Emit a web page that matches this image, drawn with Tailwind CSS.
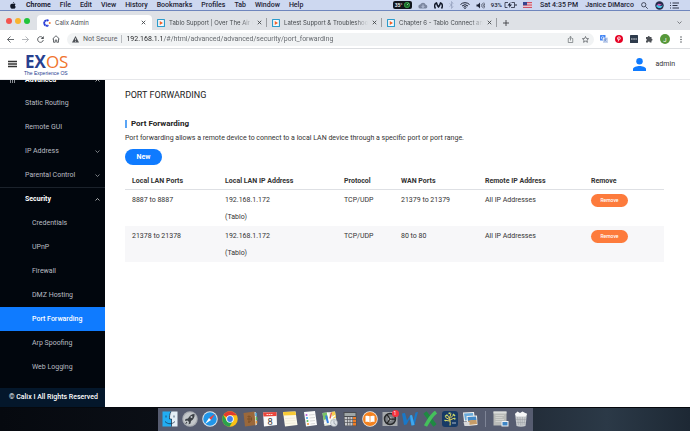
<!DOCTYPE html>
<html lang="en">
<head>
  <meta charset="utf-8">
  <meta name="viewport" content="width=device-width, initial-scale=1">
  <title>Calix Admin</title>
  <script src="https://cdn.jsdelivr.net/npm/@tailwindcss/browser@4"></script>
</head>
<body class="flex h-screen flex-col overflow-hidden bg-[#05080d] font-[Roboto,sans-serif] text-[7px] text-[#333]">

  <!-- shared icons -->
  <svg class="hidden">
    <symbol id="play" viewBox="0 0 16 16"><rect x="1" y="1" width="14" height="14" rx="1.5" fill="#f4fafd" stroke="#2c9bcb" stroke-width="2.4"/><path d="M5.5 4v8l6.5-4z" fill="#f2622b"/></symbol>
    <symbol id="close" viewBox="0 0 10 10"><path d="M1.5 1.5l7 7M8.5 1.5l-7 7" stroke="#3c4043" stroke-width="1.7" fill="none"/></symbol>
    <symbol id="down" viewBox="0 0 10 6"><path d="M1 1l4 4 4-4" stroke="currentColor" stroke-width="1.3" fill="none"/></symbol>
    <symbol id="up" viewBox="0 0 10 6"><path d="M1 5l4-4 4 4" stroke="currentColor" stroke-width="1.3" fill="none"/></symbol>
  </svg>

  <!-- mac menu bar -->
  <div class="flex h-[11px] shrink-0 items-center justify-between border-b border-[#6f86bd] bg-[#cdd8f0] pr-[11px] pl-[10px] text-[7px] leading-[10px] font-medium whitespace-nowrap text-[#1c2233]">
    <div class="flex items-center gap-[9px]">
      <svg class="mr-px h-[7px] w-[6px]" viewBox="0 0 14 17" fill="#111827"><path d="M9.6 0c.1 1.9-1.300 3.600-3 3.600C6.400 1.900 7.900.2 9.600 0zM7.200 4.700c.8 0 1.700-.9 3.200-.8 1.100 0 2.200.6 2.900 1.600-2.600 1.600-2.200 5 .5 6.100-.6 1.800-2.200 4.800-3.800 4.800-1.100 0-1.500-.7-2.800-.7s-1.700.7-2.800.7C2.400 16.400.2 12.700.2 9.500c0-3.400 2.100-5.300 4.100-5.300 1.300 0 2.200.5 2.900.5z"/></svg>
      <span class="font-bold">Chrome</span><span>File</span><span>Edit</span><span>View</span><span>History</span><span>Bookmarks</span><span>Profiles</span><span>Tab</span><span>Window</span><span>Help</span>
    </div>
    <div class="flex items-center gap-[6px]">
      <span class="flex h-2 w-[19px] items-center justify-between rounded-xs bg-[#10151c] px-0.5 text-[5px] text-white">35°<svg class="size-[6px]" viewBox="0 0 10 10"><circle cx="5" cy="5" r="4.500" fill="#1b6b2c" stroke="#3fbf55"/><path d="M5 5l2.500-2.500" stroke="#fff"/></svg></span>
      <svg class="h-[7px] w-[10px]" viewBox="0 0 20 14"><path d="M5 13a4 4 0 0 1-.5-8A6 6 0 0 1 15.500 5.500 3.800 3.800 0 0 1 15.500 13z" fill="#7c879f"/><path d="M10 5v6M7.500 8.500L10 11l2.500-2.500" stroke="#cdd8f0" stroke-width="1.500" fill="none"/></svg>
      <svg class="h-[7px] w-[9px]" viewBox="0 0 18 14"><path d="M3 13C0 9 1 3 5 2c1 3 2 6 4 8 2-2 3-5 4-8 4 1 5 7 2 11" fill="none" stroke="#111827" stroke-width="3"/></svg>
      <svg class="h-2 w-[5px]" viewBox="0 0 10 16"><path d="M1 4.500l7 7L5 15V1l3 3.500-7 7" fill="none" stroke="#8e9bb8" stroke-width="1.300"/></svg>
      <svg class="h-[7px] w-[10px]" viewBox="0 0 20 14" fill="none" stroke="#1c2233" stroke-width="2"><path d="M1 5a13 13 0 0 1 18 0M4 8a9 9 0 0 1 12 0M7 10.500a4.500 4.500 0 0 1 6 0"/><circle cx="10" cy="12.500" r=".6"/></svg>
      <svg class="h-[7px] w-[9px]" viewBox="0 0 18 14"><path d="M1 5h3l4-4v12L4 9H1z" fill="#1c2233"/><path d="M10.500 4.500a4 4 0 0 1 0 5M13 2.500a7 7 0 0 1 0 9M15.500 1a10 10 0 0 1 0 12" fill="none" stroke="#1c2233" stroke-width="1.200"/></svg>
      <span class="flex items-center gap-0.5 text-[6px]">93%
        <svg class="h-[6px] w-[13px]" viewBox="0 0 26 12"><path d="M8 1H2v10h5M15 1h6v10h-7" fill="none" stroke="#1c2233" stroke-width="1.500"/><path d="M13 0L7 7h4l-1 5 6-7h-4z" fill="#1c2233"/><path d="M23 4v4h2V4z" fill="#1c2233"/></svg></span>
      <svg class="h-[6px] w-[9px]" viewBox="0 0 18 12"><path fill="#f4f4f8" d="M0 0h18v12H0z"/><path d="M0 1h18M0 4.300h18M0 7.600h18M0 11h18" stroke="#c6354b" stroke-width="1.700"/><path fill="#34458f" d="M0 0h8v6.500H0z"/></svg>
      <span class="ml-0.5">Sat 4:35 PM</span>
      <span class="ml-px">Janice DiMarco</span>
      <svg class="ml-px size-[7px]" viewBox="0 0 14 14" fill="none" stroke="#1c2233" stroke-width="1.500"><circle cx="5.500" cy="5.500" r="4.300"/><path d="M9 9l4.500 4.500"/></svg>
      <svg class="ml-px size-[9px]" viewBox="0 0 16 16"><circle cx="8" cy="8" r="7.500" fill="#262a4a"/><path d="M2 9c3-5 8 3 12-2-1 6-8 8-12 2z" fill="#46c7e8"/><path d="M4 6c3-3 6 1 8-1-2 5-6 4-8 1z" fill="#d458b8"/></svg>
      <svg class="h-[7px] w-[9px]" viewBox="0 0 18 14" stroke="#1c2233" stroke-width="1.800"><path d="M0 2h2M5 2h13M0 7h2M5 7h10M0 12h2M5 12h13"/></svg>
    </div>
  </div>

  <!-- tab strip -->
  <div class="flex h-[19px] shrink-0 items-end bg-[#dee1e6] font-[Inter,sans-serif] text-[6px] text-[#45494d]">
    <div class="flex h-[15px] w-[37px] shrink-0 items-center gap-[3px] pb-[3px] pl-[6px]">
      <span class="size-[6px] rounded-full bg-[#f4544d]"></span><span class="size-[6px] rounded-full bg-[#f8b42e]"></span><span class="size-[6px] rounded-full bg-[#1fc43a]"></span>
    </div>
    <div class="flex h-[15px] w-[115px] items-center gap-1 rounded-t-[4px] bg-white px-[6px]">
      <svg class="size-2 shrink-0" viewBox="0 0 16 16"><path d="M11 3.500A5.500 5.500 0 1 0 11 12.500" fill="none" stroke="#2337d6" stroke-width="3.600" stroke-dasharray="4 .5"/><circle cx="13.500" cy="8" r="2" fill="#f47a35"/></svg>
      <span class="flex-1">Calix Admin</span>
      <button aria-label="Close tab"><svg class="size-[5px]"><use href="#close"/></svg></button>
    </div>
    <div class="flex h-[15px] w-[115px] items-center gap-1 px-[5px]">
      <svg class="size-2 shrink-0"><use href="#play"/></svg>
      <span class="flex-1 overflow-hidden whitespace-nowrap [mask-image:linear-gradient(90deg,#000_85%,transparent)]">Tablo Support | Over The Air (OTA)</span>
      <button aria-label="Close tab"><svg class="size-[5px]"><use href="#close"/></svg></button>
      <span class="-mr-[5px] h-[9px] w-px bg-[#9a9da2]"></span>
    </div>
    <div class="flex h-[15px] w-[115px] items-center gap-1 px-[5px]">
      <svg class="size-2 shrink-0"><use href="#play"/></svg>
      <span class="flex-1 overflow-hidden whitespace-nowrap [mask-image:linear-gradient(90deg,#000_85%,transparent)]">Latest Support &amp; Troubleshooting</span>
      <button aria-label="Close tab"><svg class="size-[5px]"><use href="#close"/></svg></button>
      <span class="-mr-[5px] h-[9px] w-px bg-[#9a9da2]"></span>
    </div>
    <div class="flex h-[15px] w-[115px] items-center gap-1 px-[5px]">
      <svg class="size-2 shrink-0"><use href="#play"/></svg>
      <span class="flex-1 overflow-hidden whitespace-nowrap [mask-image:linear-gradient(90deg,#000_85%,transparent)]">Chapter 6 - Tablo Connect and Remote</span>
      <button aria-label="Close tab"><svg class="size-[5px]"><use href="#close"/></svg></button>
      <span class="-mr-[5px] h-[9px] w-px bg-[#9a9da2]"></span>
    </div>
    <div class="flex h-[15px] flex-1 items-center justify-between pr-2 pl-[6px]">
      <button aria-label="New tab"><svg class="size-[6px]" viewBox="0 0 12 12"><path d="M6 0v12M0 6h12" stroke="#3c4043" stroke-width="1.800"/></svg></button>
      <button aria-label="Search tabs"><svg class="h-[3px] w-[5px]"><use href="#down"/></svg></button>
    </div>
  </div>

  <!-- toolbar -->
  <div class="flex h-[19px] shrink-0 items-center border-b border-[#dcdee1] bg-white pr-2 pl-[7px] text-[#5f6368]">
    <div class="flex w-[60px] shrink-0 items-center gap-2">
      <button aria-label="Back"><svg class="size-[7px]" viewBox="0 0 14 14" fill="none" stroke="#4d5156" stroke-width="1.700"><path d="M14 7H1M7 1L1 7l6 6"/></svg></button>
      <button aria-label="Forward"><svg class="size-[7px]" viewBox="0 0 14 14" fill="none" stroke="#a8abb0" stroke-width="1.700"><path d="M0 7h13M7 1l6 6-6 6"/></svg></button>
      <button aria-label="Reload"><svg class="size-[7px]" viewBox="0 0 14 14"><path d="M11.500 3.500A5.700 5.700 0 1 0 12.600 8" fill="none" stroke="#4d5156" stroke-width="1.800"/><path d="M13.500 0v6h-6z" fill="#4d5156"/></svg></button>
      <button aria-label="Home"><svg class="size-2" viewBox="0 0 16 16" fill="none" stroke="#4d5156" stroke-width="1.700"><path d="M1 8l7-6.500L15 8M3 7v7.500h3.500V10h3v4.500H13V7"/></svg></button>
    </div>
    <div class="flex h-[13px] flex-1 items-center rounded-full bg-[#f1f3f4] pr-[5px] pl-[5px]">
      <svg class="size-[7px]" viewBox="0 0 14 14"><path d="M7 0l7 13H0z" fill="#4d5156"/><path d="M7 4.500v4M7 10v1.600" stroke="#fff" stroke-width="1.400"/></svg>
      <label for="url" class="ml-1 whitespace-nowrap">Not Secure</label>
      <span class="mx-1 h-2 w-px bg-[#b8bbbf]"></span>
      <input id="url" type="text" value="192.168.1.1/#/html/advanced/advanced/security/port_forwarding" class="min-w-0 flex-1 bg-[linear-gradient(90deg,#202124_37px,#5f6368_37px)] bg-clip-text text-transparent outline-none">
      <button aria-label="Share" class="mr-2"><svg class="size-[7px]" viewBox="0 0 14 14" fill="none" stroke="#5f6368" stroke-width="1.300"><path d="M5 5H2.500v8h9V5H9M7 9V1M4.500 3L7 .7 9.500 3"/></svg></button>
      <button aria-label="Bookmark"><svg class="size-[7px]" viewBox="0 0 14 14" fill="none" stroke="#4d5156" stroke-width="1.400"><path d="M7 1l1.800 4 4.400.4-3.300 2.900 1 4.300L7 10.300l-3.900 2.300 1-4.300L.8 5.400 5.200 5z"/></svg></button>
    </div>
    <div class="ml-[6px] flex shrink-0 items-center gap-[7px]">
      <svg class="size-2" viewBox="0 0 16 16"><rect width="11" height="11" rx="1" fill="#4285f4"/><rect x="6" y="5" width="10" height="11" rx="1" fill="#c9d6ee"/><path d="M8 8h6M11 7v1c0 2-1 4-3 5M9 9c1 2 2 3 4 4" stroke="#4773c4" fill="none"/><path d="M7.500 4A2.700 2.700 0 1 0 8 6H5.500" stroke="#fff" stroke-width="1.200" fill="none"/></svg>
      <svg class="size-2" viewBox="0 0 16 16"><circle cx="8" cy="8" r="8" fill="#e60023"/><path d="M8 5.500L6.500 13M5.200 9C3.200 4 8 2.800 9.800 4.300c2.200 2.200.3 6.300-2.600 5" fill="none" stroke="#fff" stroke-width="1.600"/></svg>
      <svg class="size-2" viewBox="0 0 16 16"><rect width="16" height="16" rx="1" fill="#2e3b4c"/><path d="M2 8h12" stroke="#d5dae0" stroke-width="2" stroke-dasharray="2.500 .6"/></svg>
      <svg class="size-2" viewBox="0 0 16 16"><path d="M2 4h3.500a2 2 0 1 1 4 0H13v3.500a2 2 0 1 1 0 4V15H9.500a1.800 1.800 0 0 0-3.600 0H2v-3.500a1.800 1.800 0 0 0 0-3.600z" fill="#4d5156"/></svg>
      <span class="flex size-[10px] items-center justify-center rounded-full bg-[#57983a] text-[6px] text-white">J</span>
      <button aria-label="Menu"><svg class="ml-[3px] h-[7px] w-0.5" viewBox="0 0 4 14" fill="#4d5156"><circle cx="2" cy="2" r="1.500"/><circle cx="2" cy="7" r="1.500"/><circle cx="2" cy="12" r="1.500"/></svg></button>
    </div>
  </div>

  <!-- router header -->
  <header class="flex h-[31px] shrink-0 items-center justify-between border-b border-[#e6e7ea] bg-white pr-[15px] pl-2">
    <div class="flex items-center gap-2">
      <button aria-label="Toggle menu"><svg class="h-2 w-[9px]" viewBox="0 0 18 16" stroke="#333" stroke-width="2.600"><path d="M0 3h18M0 8h18M0 13h18"/></svg></button>
      <div>
        <div class="font-['Open_Sans',sans-serif] text-[17px] leading-[17px] text-[#f0732c]"><b class="text-[#27408f]">EX</b>OS</div>
        <div class="-ml-px font-['Liberation_Sans',sans-serif] text-[5px] leading-[6px] text-[#27408f]">The Experience OS</div>
      </div>
    </div>
    <div class="flex items-center gap-[10px]">
      <svg class="h-[13px] w-[13px]" viewBox="0 0 26 26" fill="#0f7bff"><circle cx="13" cy="6.500" r="6.500"/><path d="M0 26v-4c0-4 8-6 13-6s13 2 13 6v4z"/></svg>
      <span>admin</span>
    </div>
  </header>

  <div class="flex min-h-0 flex-1">
    <nav class="flex w-[105px] shrink-0 flex-col bg-[#01060d] text-[#b9bdc3]">
      <ul class="-mt-[13px] min-h-0 flex-1 [clip-path:inset(13px_0_0)]">
        <li class="flex h-6 items-center pt-0.5 pr-[5px] pl-[10px] font-bold text-white"><svg class="mr-[10px] size-[5px]" viewBox="0 0 10 10" stroke="#b9bdc3" stroke-width="1.500"><path d="M1 0v10M5 0v10M9 0v10"/></svg><a href="#" class="flex-1">Advanced</a><svg class="h-[3px] w-[5px]"><use href="#up"/></svg></li>
        <li class="flex h-6 items-center pl-[25px]"><a href="#">Static Routing</a></li>
        <li class="flex h-6 items-center pl-[25px]"><a href="#">Remote GUI</a></li>
        <li class="flex h-6 items-center pr-[5px] pl-[25px]"><a href="#" class="flex-1">IP Address</a><svg class="h-[3px] w-[5px]"><use href="#down"/></svg></li>
        <li class="flex h-6 items-center pr-[5px] pl-[25px]"><a href="#" class="flex-1">Parental Control</a><svg class="h-[3px] w-[5px]"><use href="#down"/></svg></li>
        <li class="flex h-6 items-center border-t border-[#1b222b] pr-[5px] pl-[25px] font-bold text-white"><a href="#" class="flex-1">Security</a><svg class="h-[3px] w-[5px]"><use href="#up"/></svg></li>
        <li class="flex h-6 items-center pl-8"><a href="#">Credentials</a></li>
        <li class="flex h-6 items-center pl-8"><a href="#">UPnP</a></li>
        <li class="flex h-6 items-center pl-8"><a href="#">Firewall</a></li>
        <li class="flex h-6 items-center pl-8"><a href="#">DMZ Hosting</a></li>
        <li class="flex h-6 items-center bg-[#0f7bff] pl-8 font-medium text-white"><a href="#">Port Forwarding</a></li>
        <li class="flex h-6 items-center pl-8"><a href="#">Arp Spoofing</a></li>
        <li class="flex h-6 items-center pl-8"><a href="#">Web Logging</a></li>
      </ul>
      <div class="flex h-[19px] items-center bg-[#04172b] pl-[9px] font-medium text-white">© Calix I All Rights Reserved</div>
    </nav>

    <main class="min-w-0 flex-1 bg-white pt-2 pr-[26px] pl-5">
      <h1 class="text-[9px] leading-[14px] text-[#222]">PORT FORWARDING</h1>
      <h2 class="mt-4 flex items-center gap-1 text-[8px] leading-[12px] font-bold text-[#222]"><span class="h-2 w-0.5 bg-[#5aa5f5]"></span>Port Forwarding</h2>
      <p class="mt-0.5 leading-[12px]">Port forwarding allows a remote device to connect to a local LAN device through a specific port or port range.</p>
      <button class="mt-[5px] block h-4 w-[37px] rounded-full bg-[#0f7bff] font-bold text-white">New</button>

      <table class="mt-2 w-full table-fixed text-left">
        <thead>
          <tr class="h-4 border-b border-[#dee0e4]">
            <th class="w-[93px] pl-[7px]">Local LAN Ports</th>
            <th class="w-[119px] pl-[7px]">Local LAN IP Address</th>
            <th class="w-[57px] pl-[7px]">Protocol</th>
            <th class="w-[84px] pl-[7px]">WAN Ports</th>
            <th class="w-[106px] pl-[7px]">Remote IP Address</th>
            <th class="pl-[7px]">Remove</th>
          </tr>
        </thead>
        <tbody class="align-top leading-[17px]">
          <tr>
            <td class="pt-0.5 pl-[7px]">8887 to 8887</td>
            <td class="pt-0.5 pl-[7px]">192.168.1.172<br>(Tablo)</td>
            <td class="pt-0.5 pl-[7px]">TCP/UDP</td>
            <td class="pt-0.5 pl-[7px]">21379 to 21379</td>
            <td class="pt-0.5 pl-[7px]">All IP Addresses</td>
            <td class="pt-1 pl-[7px]"><button class="block h-[13px] w-[37px] rounded-full bg-[#fd7b3c] text-[5px] leading-[13px] font-medium text-white">Remove</button></td>
          </tr>
          <tr class="bg-[#f7f7f9]">
            <td class="pt-0.5 pl-[7px]">21378 to 21378</td>
            <td class="pt-0.5 pl-[7px]">192.168.1.172<br>(Tablo)</td>
            <td class="pt-0.5 pl-[7px]">TCP/UDP</td>
            <td class="pt-0.5 pl-[7px]">80 to 80</td>
            <td class="pt-0.5 pl-[7px]">All IP Addresses</td>
            <td class="pt-1 pl-[7px]"><button class="block h-[13px] w-[37px] rounded-full bg-[#fd7b3c] text-[5px] leading-[13px] font-medium text-white">Remove</button></td>
          </tr>
        </tbody>
      </table>
    </main>
  </div>

  <!-- desktop and dock -->
  <div class="flex h-6 shrink-0 justify-center border-t border-[#05080d] bg-[linear-gradient(90deg,#06090f_0%,#0b0f16_24%,#222c38_76%,#2b3947_88%,#1d2834_100%)]">
    <div class="flex items-start bg-[#565c70] px-0.5 pt-[3px]">
      <svg class="mx-0.5 size-4" viewBox="0 0 32 32"><path d="M1 1h17c-3 6-3 10-3 15h4v15H1z" fill="#22aef3"/><path d="M18 1h13v30H19V16h-4c0-5 0-9 3-15z" fill="#e4eef6"/><path d="M8 9v4M24 9v4M6 21c6 6 14 6 20 0M18 1c-3 6-3 10-3 15h4v15" fill="none" stroke="#16324d" stroke-width="1.500"/></svg>
      <svg class="mx-0.5 size-4" viewBox="0 0 32 32"><circle cx="16" cy="16" r="15.500" fill="#a9adb2"/><circle cx="16" cy="16" r="13" fill="#c3c7ca"/><path d="M25 6c-6 0-10 4-13 9l-5 1-1 4 5-1 3 3-1 5 4-2 1-5c5-3 8-8 7-14zM9 21l-3 5 5-2z" fill="#3b4046"/><circle cx="19" cy="12" r="2" fill="#c3c7ca"/></svg>
      <svg class="mx-0.5 size-4" viewBox="0 0 32 32"><circle cx="16" cy="16" r="15.500" fill="#dfe5ea"/><circle cx="16" cy="16" r="13.500" fill="#2196e8"/><path d="M26 6L18 18l-4-4z" fill="#f0443c"/><path d="M6 26l8-12 4 4z" fill="#fff"/></svg>
      <svg class="mx-0.5 size-4" viewBox="0 0 32 32"><circle cx="16" cy="16" r="15.500" fill="#fbc116"/><path d="M16 16L2.600 8.200A15.500 15.500 0 0 1 29.400 8.500H16z" fill="#e33b2e"/><path d="M2.600 8.200A15.500 15.500 0 0 0 15 31.500l7-12-6-3.500-6.500 3.500z" fill="#2ba24c"/><circle cx="16" cy="16" r="7.500" fill="#fff"/><circle cx="16" cy="16" r="5.800" fill="#3f80ee"/></svg>
      <svg class="mx-0.5 size-4" viewBox="0 0 32 32"><path d="M3 4l22-3 3 27-22 3z" fill="#9a683b"/><path d="M25 2l3 1 2 24-3 2z" fill="#e9e3d2"/><path d="M28 4v6" stroke="#4aa8dd" stroke-width="3"/><path d="M29 12v6" stroke="#5dbb58" stroke-width="3"/><path d="M29 20v5" stroke="#f09c38" stroke-width="3"/><path d="M11 11c4-2 8 0 8 5s-3 6-7 6M14 10v14M10 16h9" stroke="#7c5029" stroke-width="2" fill="none"/></svg>
      <svg class="mx-0.5 size-4" viewBox="0 0 32 32"><path d="M2 3l27-1 1 26-26 3z" fill="#fafafa"/><path d="M2 3l27-1v8L3 11z" fill="#e9453c"/><path d="M9 7h13" stroke="#fff" stroke-width="1.600" stroke-dasharray="3 1"/><text x="11" y="27" font-size="17" font-family="Inter" fill="#333">8</text></svg>
      <svg class="mx-0.5 size-4" viewBox="0 0 32 32"><path d="M2 2l25-1 4 27-25 3z" fill="#fbf8ea"/><path d="M2 2l25-1 1 7L3 9z" fill="#f8cb35"/><path d="M6 15l20-1M7 20l20-1M7 25l20-1" stroke="#e2ddc8"/></svg>
      <svg class="mx-0.5 size-4" viewBox="0 0 32 32"><path d="M4 2l22-2 4 28-22 3z" fill="#fafafa"/><circle cx="9" cy="8" r="2" fill="#b258d8"/><circle cx="10" cy="14" r="2" fill="#3c9ff0"/><circle cx="11" cy="20" r="2" fill="#54c455"/><circle cx="12" cy="26" r="2" fill="#f29a37"/><path d="M14 8l11-1M15 14l11-1M16 20l10-1M17 26l9-1" stroke="#ccc" stroke-width="1.500"/></svg>
      <svg class="mx-0.5 size-4" viewBox="0 0 32 32"><path d="M1 4l25-3 4 25-25 4z" fill="#e8ecdf"/><path d="M1 4l9-1 3 12-10 3z" fill="#79c267"/><path d="M19 2l7-1 2 12-6 2z" fill="#f6ce4c"/><path d="M4 25l22-16M11 3l6 25" stroke="#fff" stroke-width="3"/><path d="M8 9l4 15" stroke="#347fe0" stroke-width="4"/><path d="M19 3l-3 12" stroke="#e25b4d" stroke-width="2.500"/><circle cx="24" cy="24" r="7" fill="#dfe3e8" stroke="#9098a3"/><path d="M24 19v6l4 2" stroke="#66707c" fill="none"/></svg>
      <svg class="mx-0.5 size-4" viewBox="0 0 32 32"><path d="M3 2h26v28H5z" fill="#4a4c51"/><path d="M5 4h22v6H5z" fill="#9fa6a7"/><path d="M5 12h16v17H6z" fill="#c8c9cb"/><path d="M22 12h6v17h-6z" fill="#ef7d27"/><path d="M5 17h23M5 23h23M11 12v17M16 12v17" stroke="#4a4c51" stroke-width="1.300"/></svg>
      <svg class="mx-0.5 size-4" viewBox="0 0 32 32"><circle cx="16" cy="16" r="15.500" fill="#f3eee7"/><circle cx="16" cy="16" r="14" fill="#f48220"/><path d="M16 11c-3-2-6-2-9-1v12c3-1 6-1 9 1 3-2 6-2 9-1V10c-3-1-6-1-9 1z" fill="#fff"/><path d="M16 11v12" stroke="#f48220" stroke-width="1.500"/></svg>
      <div class="relative mx-0.5">
        <svg class="size-4" viewBox="0 0 32 32"><path d="M1 2h30v28H1z" fill="#a6a9ad"/><circle cx="16" cy="16" r="11" fill="#7b7e83" stroke="#292b2e" stroke-width="3"/><circle cx="16" cy="16" r="4" fill="#b4b7ba"/><path d="M16 16h10M16 16l-6-9M16 16l-6 9" stroke="#222" stroke-width="2.500"/></svg>
        <span class="absolute -top-px -right-px flex size-[7px] items-center justify-center rounded-full bg-[#f5333f] text-[5px] leading-none text-white">1</span>
      </div>
      <svg class="mx-0.5 size-4" viewBox="0 0 32 32"><path d="M0 5l6-1 4 15 6-10 4-1 3 11 4-16 5-1-7 26-6 1-4-13-6 11-5 1z" fill="#1978c8"/><path d="M16 9l4-1 5 20-6 1z" fill="#41a7ec"/></svg>
      <svg class="mx-0.5 size-4" viewBox="0 0 32 32" fill="none"><path d="M6 3l20 26" stroke="#1e8a42" stroke-width="8"/><path d="M28 2C20 8 14 17 7 30" stroke="#45c05c" stroke-width="7"/></svg>
      <svg class="mx-0.5 size-4" viewBox="0 0 32 32"><rect width="32" height="32" rx="6" fill="#173a66"/><path d="M16 29c1-6 0-9-1-14M15 17L7 13M15 15L10 7M15 14l3-9M16 15l7-7M16 18l9-4M16 20l-8-1" fill="none" stroke="#e6d65c" stroke-width="2"/><path d="M6 11l4-3M13 5l4-1M22 6l4 4M5 18l3 2M24 16l3-1" stroke="#c9dc6c" stroke-width="3"/><path d="M20 24h8" stroke="#dfe7f0" stroke-width="1.500"/></svg>
      <svg class="mx-0.5 size-4" viewBox="0 0 32 32"><path d="M2 3l22-1 2 17-22 2z" fill="#f6f4f0"/><path d="M4 5l18-1 2 13-18 2z" fill="#68a9da"/><path d="M9 10l21-1 1 19-21 2z" fill="#f4f2ee"/><path d="M11 12l17-1 1 7-17 2z" fill="#4389c7"/><path d="M12 20c6-3 12-2 17-2l1 8-17 2z" fill="#c59b67"/><path d="M3 22h12v8H5z" fill="#d8d9db"/></svg>
      <span class="mx-[5px] h-4 w-px bg-[#7e8496]"></span>
      <svg class="mx-0.5 size-4" viewBox="0 0 32 32"><path d="M1 1h26v28H1z" fill="#b9bbb8"/><path d="M1 1h26v4H1z" fill="#dcdedd"/><path d="M5 9h17M5 13h14M5 17h17M5 21h11" stroke="#d9dad6" stroke-width="1.500"/><path d="M17 20h14v11H17z" fill="#f1f3f5"/><path d="M19 22h10v7H19z" fill="#3f86c6"/></svg>
      <svg class="mx-0.5 size-4" viewBox="0 0 32 32"><path d="M4 5h24l-3 25c-5 2-13 2-18 0z" fill="#c8cbce"/><path d="M4 6l5-5 5 3 5-3 9 5-3 5H7z" fill="#f6f7f8"/><path d="M9 12l2 16M14 12l1 17M19 12l-1 17M24 12l-2 16M6 17h20M7 23h18" stroke="#989da3"/></svg>
    </div>
  </div>
</body>
</html>
